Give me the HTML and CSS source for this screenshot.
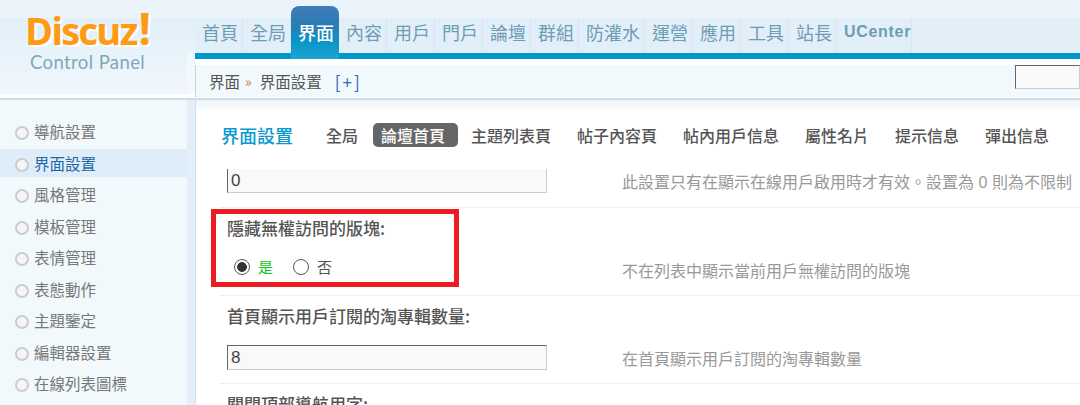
FILE: index.html
```html
<!DOCTYPE html>
<html lang="zh-Hant">
<head>
<meta charset="utf-8">
<title>Discuz! Control Panel</title>
<link rel="stylesheet" href="styles.css">
</head>
<body>
<div class="page">
  <header class="header">
    <div class="logo">
      <div class="logo-mark">Discuz<span class="logo-bang">!</span></div>
      <div class="logo-sub">Control Panel</div>
    </div>
    <div class="header-main">
      <nav class="nav">
        <a class="nav-item">首頁</a>
        <a class="nav-item">全局</a>
        <a class="nav-item nav-active">界面</a>
        <a class="nav-item">內容</a>
        <a class="nav-item">用戶</a>
        <a class="nav-item">門戶</a>
        <a class="nav-item">論壇</a>
        <a class="nav-item">群組</a>
        <a class="nav-item">防灌水</a>
        <a class="nav-item">運營</a>
        <a class="nav-item">應用</a>
        <a class="nav-item">工具</a>
        <a class="nav-item">站長</a>
        <a class="nav-item nav-latin">UCenter</a>
      </nav>
      <div class="crumb-wrap">
        <div class="crumb">
          <span>界面</span><span class="crumb-sep">»</span><span>界面設置</span><a class="crumb-add">[+]</a>
          <input class="crumb-search" type="text">
        </div>
      </div>
    </div>
  </header>
  <div class="body">
    <aside class="side">
      <ul class="side-list">
        <li class="side-item">導航設置</li>
        <li class="side-item side-active">界面設置</li>
        <li class="side-item">風格管理</li>
        <li class="side-item">模板管理</li>
        <li class="side-item">表情管理</li>
        <li class="side-item">表態動作</li>
        <li class="side-item">主題鑒定</li>
        <li class="side-item">編輯器設置</li>
        <li class="side-item">在線列表圖標</li>
      </ul>
    </aside>
    <main class="main">
      <div class="tabs">
        <h1 class="tabs-title">界面設置</h1>
        <a class="tab tab-first">全局</a>
        <a class="tab tab-active">論壇首頁</a>
        <a class="tab">主題列表頁</a>
        <a class="tab">帖子內容頁</a>
        <a class="tab">帖內用戶信息</a>
        <a class="tab">屬性名片</a>
        <a class="tab">提示信息</a>
        <a class="tab">彈出信息</a>
      </div>
      <div class="rows">
        <section class="row row-clipped">
          <div class="control"><input class="field" type="text" value="0"></div>
          <p class="desc">此設置只有在顯示在線用戶啟用時才有效。設置為 <span class="desc-num">0</span> 則為不限制</p>
        </section>
        <section class="row">
          <h2 class="label">隱藏無權訪問的版塊:</h2>
          <div class="control radios">
            <label class="radio radio-on"><input type="radio" name="hide" checked>是</label>
            <label class="radio"><input type="radio" name="hide">否</label>
          </div>
          <p class="desc">不在列表中顯示當前用戶無權訪問的版塊</p>
        </section>
        <section class="row">
          <h2 class="label">首頁顯示用戶訂閱的淘專輯數量:</h2>
          <div class="control"><input class="field" type="text" value="8"></div>
          <p class="desc">在首頁顯示用戶訂閱的淘專輯數量</p>
        </section>
        <section class="row">
          <h2 class="label">關閉頂部導航用字:</h2>
        </section>
        <div class="highlight"></div>
      </div>
    </main>
  </div>
</div>
</body>
</html>
```
FILE: styles.css
```css
* { box-sizing: border-box; }
html, body { margin: 0; padding: 0; height: 405px; overflow: hidden; background: #fff; }
body { font-family: "Noto Sans CJK TC", "Liberation Sans", sans-serif; font-size: 15px; color: #555; }
.page { width: 1080px; height: 405px; display: flex; flex-direction: column; overflow: hidden; }

/* header */
.header { display: flex; height: 100px; flex: none; border-bottom: 2px solid #cfdde6; background: #fff; }
.logo { width: 195px; flex: none; height: 94px; background: linear-gradient(#f3f8fc, #f3f8fc) right bottom / 8px 41px no-repeat, linear-gradient(#ecf4fb 0, #ecf4fb 18px, #e2eff9 19px, #f0f7fc 94px); padding: 9px 0 0 25px; }
.logo-mark { font: bold 38px/42px "Open Sans", "Liberation Sans", sans-serif; letter-spacing: -1.7px; color: #ff9a12; text-shadow: 2px 2px 0 #fff; white-space: nowrap; }
.logo-bang { font-size: 44px; line-height: 0; margin-left: 2px; }
.logo-sub { font: 18.5px/22px "Lato", "Liberation Sans", sans-serif; color: #7ea8ba; margin: 0 0 0 5px; letter-spacing: 0.4px; }
.header-main { flex: 1; display: flex; flex-direction: column; min-width: 0; }
.nav { display: flex; align-items: flex-end; height: 53px; padding-top: 18px; background: linear-gradient(#ecf4fb 0, #ecf4fb 18px, #e2eff9 18px, #e2eff9 100%); flex: none; }
.nav-item { height: 35px; padding: 0 5px 0 7px; font-size: 18px; line-height: 28px; color: #6d9db6; border-right: 1px solid #d9e6f1; white-space: nowrap; width: 48px; flex: none; position: relative; }
.nav-item:nth-child(9) { width: 66px; }
.nav-latin { width: 75px; padding-left: 7px; font: bold 16px/28px "Liberation Sans", sans-serif; letter-spacing: 0.7px; }
.nav-active { height: 53px; margin-bottom: -6px; padding-top: 12px; margin-top: -18px; border-right: 0; color: #fff; font-weight: 500; border-radius: 8px 8px 0 0; background: linear-gradient(#3f7db7 0, #2a7cb5 20px, #0a96cb 36px, #1fa3d3 53px); z-index: 1; }
.crumb-wrap { border-top: 6px solid #0098cb; padding-top: 6px; height: 45px; flex: none; }
.crumb { display: flex; align-items: center; height: 32px; background: #f2f9fd; border-left: 1px solid #c8d4da; padding: 0 0 0 13px; font-size: 15.5px; color: #555; white-space: nowrap; }
.crumb-sep { margin: 0 8px 0 5px; color: #b07a55; font-size: 14px; }
.crumb-add { margin-left: 13px; color: #2a6cb5; font-size: 17px; letter-spacing: 2px; }
.crumb-search { margin-left: auto; align-self: flex-start; width: 65px; height: 24px; background: #f9f9f9; border: 1px solid; border-color: #666 #ccc #ccc #666; padding: 0; }

/* body */
.body { flex: 1; display: flex; min-height: 0; }
.side { width: 195px; flex: none; background: #f2f9fd; border-right: 8px solid #e2eff9; padding-top: 17px; }
.side-list { list-style: none; margin: 0; padding: 0; }
.side-item { height: 28px; margin-bottom: 3.5px; padding-left: 34px; line-height: 28px; font-size: 15.5px; color: #777; position: relative; }
.side-item::before { content: ""; position: absolute; left: 15px; top: 9px; width: 10px; height: 10px; border-radius: 50%; border: 2px solid #ccc; background: #f5f5f5; }
.side-active { background: #deedf8; color: #2266a8; }
.main { flex: 1; min-width: 0; border-left: 1px solid #d6e2ea; display: flex; flex-direction: column; background: linear-gradient(#edf4f9 0, #fff 12px); }
.tabs { display: flex; align-items: center; height: 69px; flex: none; padding: 0 0 0 25px; white-space: nowrap; overflow: hidden; }
.tabs-title { margin: 0 33px 0 0; font-size: 18px; font-weight: 500; color: #0a9ad0; line-height: 24px; }
.tab { font-size: 16px; line-height: 24px; font-weight: 500; color: #555; margin-right: 26px; flex: none; }
.tab-first { margin-right: 15px; }
.tab-active { background: #666; color: #fff; border-radius: 5px; padding: 0 13px 0 8px; margin-right: 13px; height: 24px; }

/* rows */
.rows { flex: 1; position: relative; min-height: 0; overflow: hidden; padding-left: 24px; }
.row { display: grid; grid-template-columns: 320px 1fr; column-gap: 75px; padding: 10px 0 13px 7px; border-bottom: 1px dotted #dbe7ef; }
.row-clipped { padding-top: 0; margin-top: -1px; }
.label { grid-column: 1 / -1; margin: 0 0 19px; font-size: 17px; font-weight: 500; line-height: 20px; color: #555; white-space: nowrap; }
.control { height: 25px; display: flex; align-items: center; }
.field { width: 320px; height: 25px; background: #f9f9f9; border: 1px solid; border-color: #666 #ccc #ccc #666; padding: 1px 3px 0; font: 17px "Liberation Sans", sans-serif; color: #444; }
.radios { gap: 20px; padding: 0 0 6px 7px; }
.radio { display: flex; align-items: center; font-size: 15px; color: #555; line-height: 19px; }
.radio input { appearance: none; width: 16px; height: 16px; margin: 0 8px 0 0; border: 1.5px solid #555; border-radius: 50%; background: #fff; }
.radio input:checked { background: radial-gradient(circle, #333 0, #333 4.5px, #fff 5.2px); }
.radio-on { color: #14c914; }
.desc { margin: 0; font-size: 16px; line-height: 25px; color: #999; white-space: nowrap; position: relative; top: 1px; }
.desc-num { font-family: "Liberation Sans", sans-serif; color: #a59a8f; margin: 0 1px; }
.highlight { position: absolute; left: 15px; top: 40px; width: 248px; height: 78px; border: 5px solid #ed1c24; pointer-events: none; }
```
